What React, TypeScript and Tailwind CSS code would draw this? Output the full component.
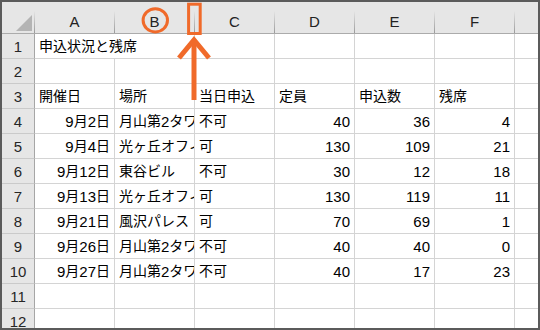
import React from 'react';

const COLS = ['A', 'B', 'C', 'D', 'E', 'F'];

type Row = { date: string; place: string; sameDay: string; cap: number; applied: number; left: number };

const ROWS: Row[] = [
  { date: '9月2日', place: '月山第2タワー', sameDay: '不可', cap: 40, applied: 36, left: 4 },
  { date: '9月4日', place: '光ヶ丘オフィス', sameDay: '可', cap: 130, applied: 109, left: 21 },
  { date: '9月12日', place: '東谷ビル', sameDay: '不可', cap: 30, applied: 12, left: 18 },
  { date: '9月13日', place: '光ヶ丘オフィス', sameDay: '可', cap: 130, applied: 119, left: 11 },
  { date: '9月21日', place: '風沢パレス', sameDay: '可', cap: 70, applied: 69, left: 1 },
  { date: '9月26日', place: '月山第2タワー', sameDay: '不可', cap: 40, applied: 40, left: 0 },
  { date: '9月27日', place: '月山第2タワー', sameDay: '不可', cap: 40, applied: 17, left: 23 },
];

const cellCN =
  'flex h-full w-[80px] shrink-0 items-center overflow-hidden whitespace-nowrap border-r border-[#d4d4d4] px-[4px]';
const rowHeadCN =
  'flex h-full w-[33px] shrink-0 items-center justify-center border-r border-b border-r-[#a6a6a6] border-b-[#cacaca] bg-[#e6e6e6] text-[15px] text-[#262626]';

// latin runs get a slightly larger size so digits sit like the sheet font
const Txt = ({ s }: { s: string }) => (
  <>
    {s.split(/([0-9A-Za-z]+)/).map((p, i) =>
      /[0-9A-Za-z]/.test(p) ? (
        <span key={i} className="text-[15px]">
          {p}
        </span>
      ) : (
        p
      ),
    )}
  </>
);

const Cell = ({ v, right }: { v?: string | number; right?: boolean }) => (
  <div className={cellCN + (right ? ' justify-end' : ' justify-start')}>
    {v !== undefined && <Txt s={String(v)} />}
  </div>
);

const HeadSep = () => (
  <div className="h-[22px] w-px shrink-0 self-end bg-gradient-to-b from-[#e6e6e6] to-[#9a9a9a]" />
);

const BodyRow = ({ n, children }: { n: number; children?: React.ReactNode }) => (
  <div className="flex h-[25px] shrink-0">
    <div className={rowHeadCN}>{n}</div>
    <div className="flex h-full flex-1 border-b border-[#d4d4d4]">
      {children}
      <div className="flex-1" />
    </div>
  </div>
);

const Annotations = () => (
  <svg className="pointer-events-none absolute left-0 top-0" width={540} height={330} viewBox="0 0 540 330">
    <ellipse cx={155.3} cy={20.3} rx={12.2} ry={11.6} fill="none" stroke="#f06a2a" strokeWidth={3} />
    <rect x={188.6} y={4.2} width={11.6} height={29.3} fill="none" stroke="#f06a2a" strokeWidth={3} />
    <polyline points="179,58 194,40 209,58" fill="none" stroke="#f06a2a" strokeWidth={5} strokeLinejoin="miter" />
    <line x1={194} y1={40} x2={194} y2={100} stroke="#f06a2a" strokeWidth={5} />
  </svg>
);

const App = () => {
  return (
    <div className="relative h-[330px] w-[540px] overflow-hidden bg-white">
      <div className="flex h-full w-full flex-col overflow-hidden border-2 border-[#5b5b5b] font-[family-name:'Liberation_Sans','Noto_Sans_CJK_JP',sans-serif] text-[14px] leading-none text-black">
        {/* column headers */}
        <div className="flex h-[32px] shrink-0 border-b border-[#ababab] bg-[#e6e6e6]">
          <div className="flex h-full w-[33px] shrink-0">
            <div className="flex flex-1 items-end justify-end pb-[1px] pr-[1px]">
              <svg width={18} height={18} viewBox="0 0 18 18">
                <polygon points="17,1 17,17 1,17" fill="#b4b4b4" />
              </svg>
            </div>
            <HeadSep />
          </div>
          {COLS.map((c) => (
            <div key={c} className="flex h-full w-[80px] shrink-0">
              <div className="flex flex-1 items-center justify-center pt-[8px] text-[15px] text-[#222]">{c}</div>
              <HeadSep />
            </div>
          ))}
          <div className="flex-1" />
        </div>

        <BodyRow n={1}>
          <div className="flex h-full w-[160px] shrink-0 items-center overflow-hidden whitespace-nowrap border-r border-[#d4d4d4] px-[4px]">
            申込状況と残席
          </div>
          {COLS.slice(2).map((c) => (
            <Cell key={c} />
          ))}
        </BodyRow>
        <BodyRow n={2}>
          {COLS.map((c) => (
            <Cell key={c} />
          ))}
        </BodyRow>
        <BodyRow n={3}>
          <Cell v="開催日" />
          <Cell v="場所" />
          <Cell v="当日申込" />
          <Cell v="定員" />
          <Cell v="申込数" />
          <Cell v="残席" />
        </BodyRow>
        {ROWS.map((r, i) => (
          <BodyRow key={r.date} n={i + 4}>
            <Cell v={r.date} right />
            <Cell v={r.place} />
            <Cell v={r.sameDay} />
            <Cell v={r.cap} right />
            <Cell v={r.applied} right />
            <Cell v={r.left} right />
          </BodyRow>
        ))}
        {[11, 12].map((n) => (
          <BodyRow key={n} n={n}>
            {COLS.map((c) => (
              <Cell key={c} />
            ))}
          </BodyRow>
        ))}
      </div>
      <Annotations />
    </div>
  );
};

export default App;
